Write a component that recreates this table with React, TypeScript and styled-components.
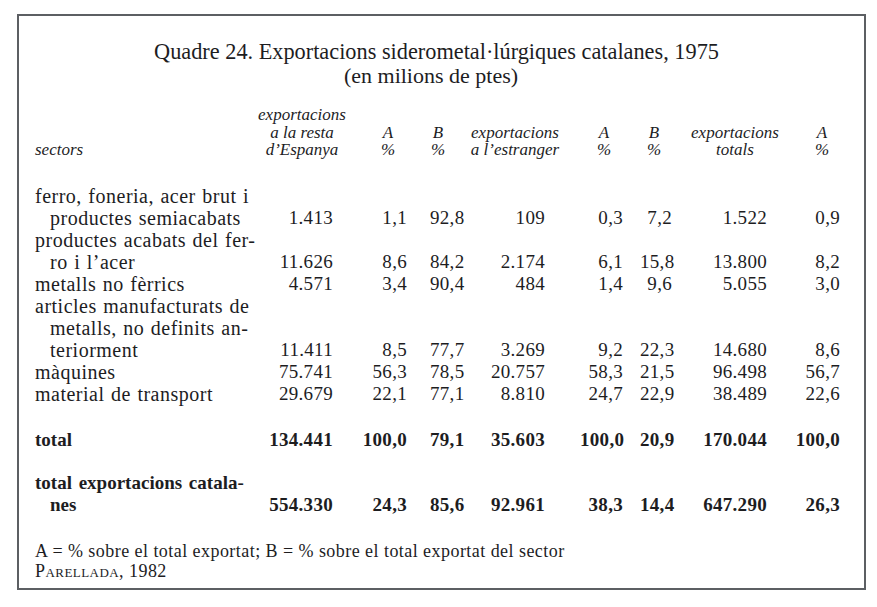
import React from "react";
import styled, { createGlobalStyle } from "styled-components";

const Global = createGlobalStyle`
  html, body { margin: 0; padding: 0; background: #ffffff; }
  body { font-family: "Liberation Serif", "Times New Roman", serif; color: #1d1d1f; }
`;

const Page = styled.div`
  width: 877px;
  height: 607px;
  padding: 14px 0 0 17px;
  box-sizing: border-box;
`;

const Frame = styled.section`
  width: 849px;
  height: 576px;
  box-sizing: border-box;
  border: 2px solid #5c5f63;
  padding: 23px 8px 0 16px;
  display: flex;
  flex-direction: column;
`;

const Title = styled.h1`
  margin: 0;
  font-weight: normal;
  font-size: 22.3px;
  line-height: 26px;
  text-align: center;
  padding-right: 18px;
`;

const Subtitle = styled.div`
  font-size: 22px;
  line-height: 22px;
  text-align: center;
  padding-right: 29px;
`;

const COLS = "221px 94px 80px 40px 110px 60px 50px 100px 66px";

const HeadRow = styled.div`
  display: grid;
  grid-template-columns: ${COLS};
  margin-top: 19px;
  font-style: italic;
  font-size: 17px;
  line-height: 17.5px;
`;

const HeadCell = styled.div<{ $pad: number }>`
  align-self: end;
  text-align: center;
  padding-right: ${(p) => p.$pad}px;
  white-space: nowrap;
`;

const SectorHead = styled.div`
  align-self: end;
`;

const Body = styled.div`
  margin-top: 26px;
  display: flex;
  flex-direction: column;
`;

const Row = styled.div<{ $bold?: boolean; $gap?: number }>`
  display: grid;
  grid-template-columns: ${COLS};
  font-size: 19px;
  line-height: 22px;
  font-weight: ${(p) => (p.$bold ? 700 : 400)};
  margin-top: ${(p) => p.$gap ?? 0}px;
`;

const Sector = styled.div<{ $bold?: boolean }>`
  font-size: ${(p) => (p.$bold ? 19 : 20)}px;
  letter-spacing: ${(p) => (p.$bold ? 0 : 0.5)}px;
  word-spacing: ${(p) => (p.$bold ? 2 : 1)}px;
  white-space: nowrap;
`;

const Cont = styled.div`
  padding-left: 15px;
`;

const Num = styled.div<{ $pad: number }>`
  align-self: end;
  text-align: right;
  padding-right: ${(p) => p.$pad}px;
  letter-spacing: 0.3px;
  white-space: nowrap;
`;

const Notes = styled.div`
  margin-top: 25px;
  font-size: 18px;
  line-height: 20px;
  letter-spacing: 0.45px;
`;

const SmallCaps = styled.span`
  font-variant: small-caps;
`;

type Col = { head: string[]; hp: number; np: number };

const cols: Col[] = [
  { head: ["exportacions", "a la resta", "d\u2019Espanya"], hp: 2, np: 17 },
  { head: ["A", "%"], hp: 4, np: 23 },
  { head: ["B", "%"], hp: 24, np: 15 },
  { head: ["exportacions", "a l\u2019estranger"], hp: 20, np: 35 },
  { head: ["A", "%"], hp: 12, np: 17 },
  { head: ["B", "%"], hp: 22, np: 18 },
  { head: ["exportacions", "totals"], hp: 10, np: 23 },
  { head: ["A", "%"], hp: 2, np: 16 },
];

type DataRow = { lines: string[]; vals: string[]; bold?: boolean; gap?: number };

const rows: DataRow[] = [
  { lines: ["ferro, foneria, acer brut i", "productes semiacabats"], vals: ["1.413", "1,1", "92,8", "109", "0,3", "7,2", "1.522", "0,9"] },
  { lines: ["productes acabats del fer-", "ro i l\u2019acer"], vals: ["11.626", "8,6", "84,2", "2.174", "6,1", "15,8", "13.800", "8,2"] },
  { lines: ["metalls no f\u00e8rrics"], vals: ["4.571", "3,4", "90,4", "484", "1,4", "9,6", "5.055", "3,0"] },
  { lines: ["articles manufacturats de", "metalls, no definits an-", "teriorment"], vals: ["11.411", "8,5", "77,7", "3.269", "9,2", "22,3", "14.680", "8,6"] },
  { lines: ["m\u00e0quines"], vals: ["75.741", "56,3", "78,5", "20.757", "58,3", "21,5", "96.498", "56,7"] },
  { lines: ["material de transport"], vals: ["29.679", "22,1", "77,1", "8.810", "24,7", "22,9", "38.489", "22,6"] },
  { lines: ["total"], vals: ["134.441", "100,0", "79,1", "35.603", "100,0", "20,9", "170.044", "100,0"], bold: true, gap: 24 },
  { lines: ["total exportacions catala-", "nes"], vals: ["554.330", "24,3", "85,6", "92.961", "38,3", "14,4", "647.290", "26,3"], bold: true, gap: 21 },
];

export default function App() {
  return (
    <>
      <Global />
      <Page>
        <Frame>
          <Title>Quadre 24. Exportacions siderometal·lúrgiques catalanes, 1975</Title>
          <Subtitle>(en milions de ptes)</Subtitle>
          <HeadRow>
            <SectorHead>sectors</SectorHead>
            {cols.map((c, i) => (
              <HeadCell key={i} $pad={c.hp}>
                {c.head.map((h, j) => (
                  <div key={j}>{h}</div>
                ))}
              </HeadCell>
            ))}
          </HeadRow>
          <Body>
            {rows.map((r, i) => (
              <Row key={i} $bold={r.bold} $gap={r.gap}>
                <Sector $bold={r.bold}>
                  {r.lines.map((l, j) => (j === 0 ? <div key={j}>{l}</div> : <Cont key={j}>{l}</Cont>))}
                </Sector>
                {r.vals.map((v, j) => (
                  <Num key={j} $pad={cols[j].np}>
                    {v}
                  </Num>
                ))}
              </Row>
            ))}
          </Body>
          <Notes>
            <div>A = % sobre el total exportat; B = % sobre el total exportat del sector</div>
            <div>
              <SmallCaps>Parellada</SmallCaps>, 1982
            </div>
          </Notes>
        </Frame>
      </Page>
    </>
  );
}
